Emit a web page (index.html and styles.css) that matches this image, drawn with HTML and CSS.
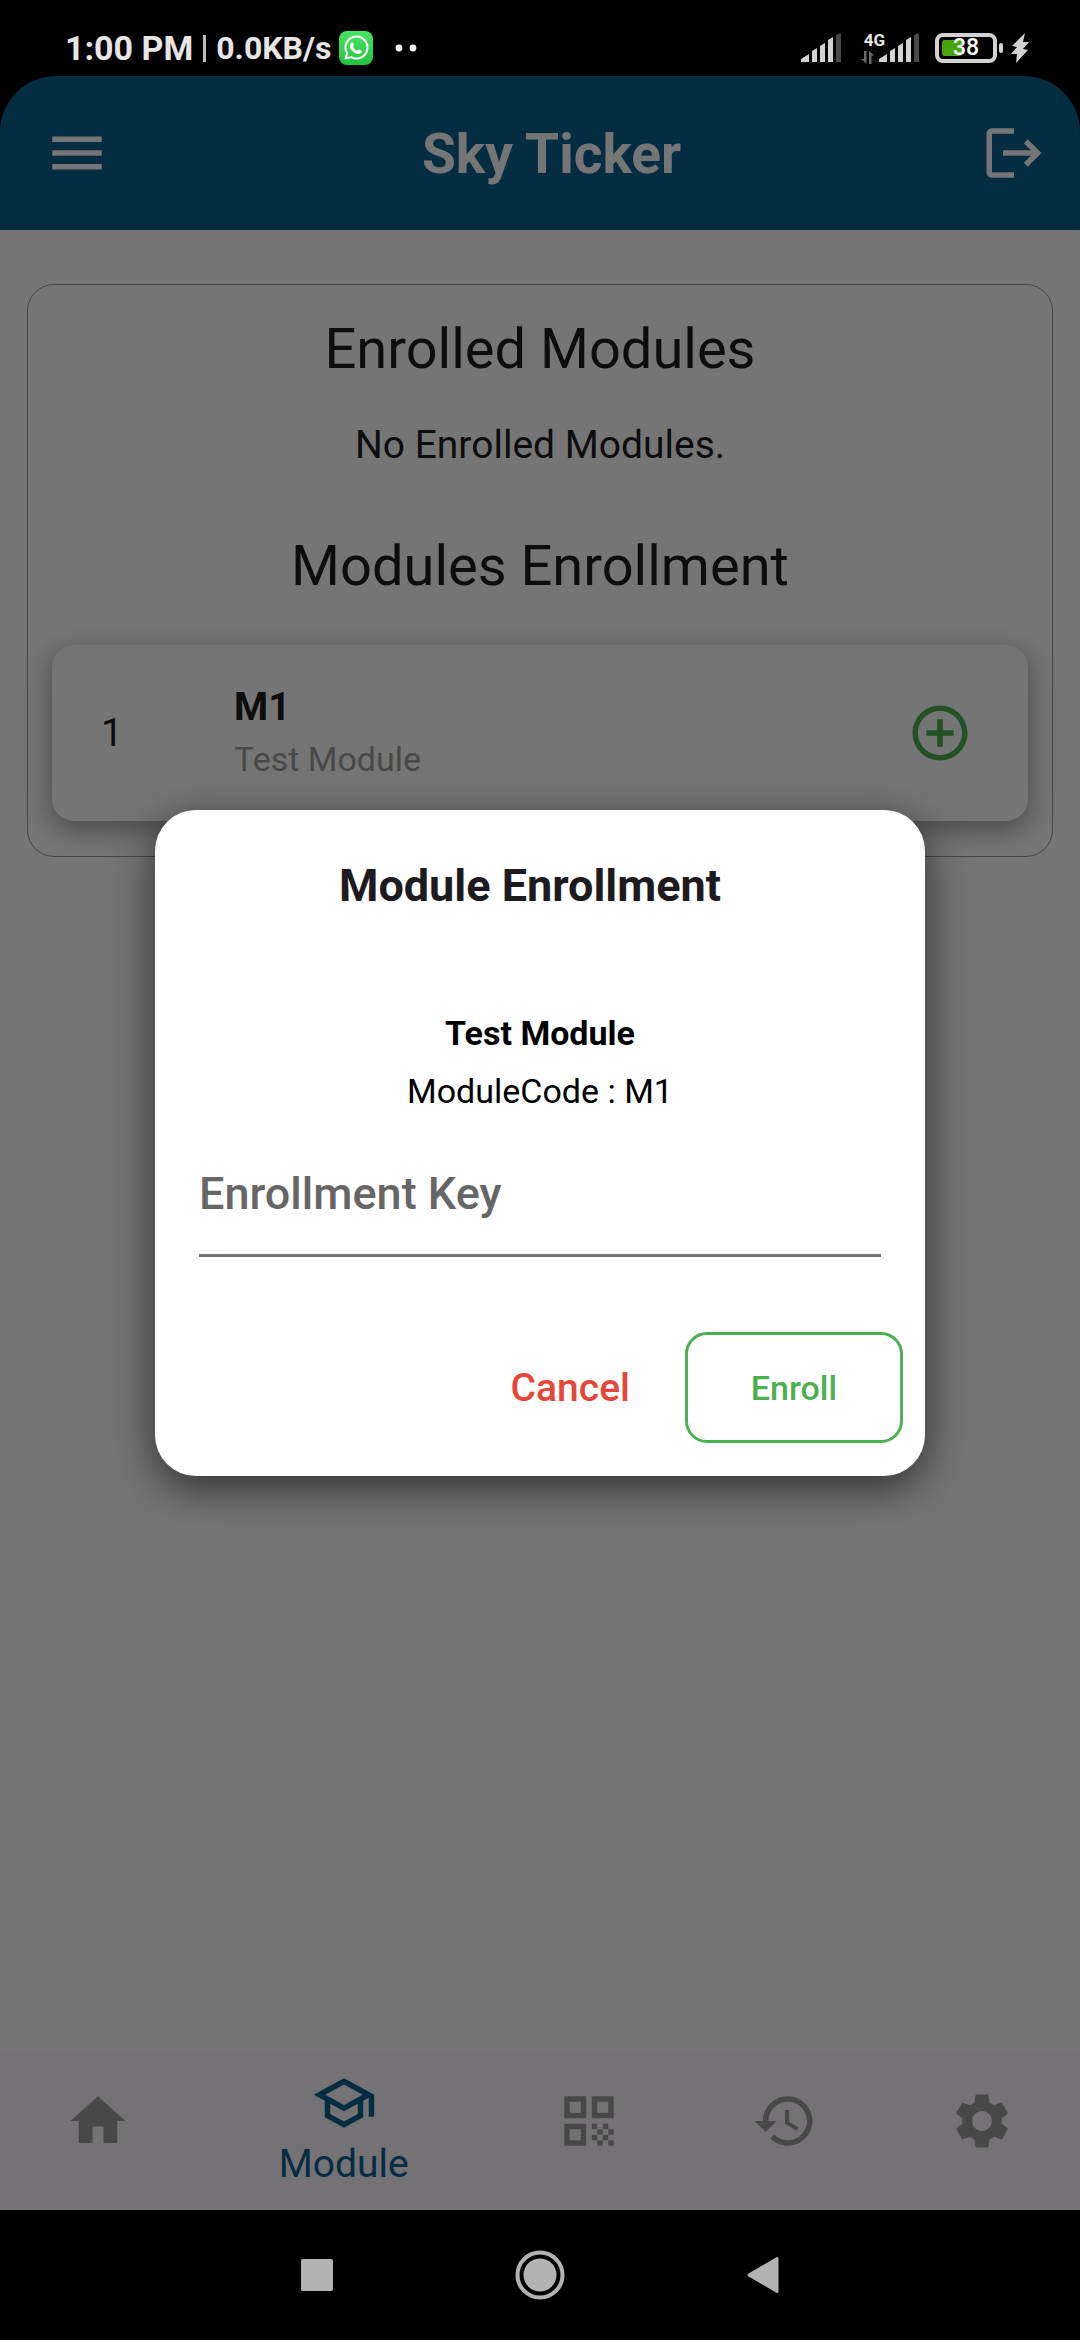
FILE: index.html
```html
<!DOCTYPE html>
<html lang="en">
<head>
<meta charset="utf-8">
<meta name="viewport" content="width=device-width, initial-scale=1">
<title>Sky Ticker</title>
<link rel="stylesheet" href="styles.css">
</head>
<body>
<div class="statusbar">
  <div class="status-left">
    <span class="clock">1:00 PM</span>
    <span class="divider"></span>
    <span class="speed">0.0KB/s</span>
    <svg class="whatsapp" width="34" height="34" viewBox="0 0 34 34" aria-hidden="true">
      <defs><linearGradient id="wa" x1="0" y1="0" x2="0" y2="1"><stop offset="0" stop-color="#47e464"/><stop offset="1" stop-color="#27c23f"/></linearGradient></defs>
      <rect width="34" height="34" rx="8" fill="url(#wa)"/>
      <path d="M6.600 27.600l1.500-5.400A11 11 0 1 1 12.200 26.100z" fill="none" stroke="#fff" stroke-width="2" stroke-linejoin="round"/>
      <path d="M12.400 11.400c.6-.4 1.300-.3 1.600.4l.9 2.200c.2.600-.9 1.500-.8 1.900.9 1.800 2.200 3 4.200 3.800.400.100 1.200-1.400 1.700-1.200l2.400 1.200c.7.400.2 2.100-.5 2.600-1.700 1.300-4.100.8-6.500-.6-2.500-1.500-4.500-4.100-4.600-6.600 0-1.700.7-3 1.600-3.700z" fill="#fff"/>
    </svg>
    <svg class="dots" width="22" height="8" viewBox="0 0 22 8" aria-hidden="true"><circle cx="4" cy="4" r="3.400" fill="#fff"/><circle cx="18" cy="4" r="3.400" fill="#fff"/></svg>
  </div>
  <div class="status-right">
    <svg class="signal" width="40" height="30" viewBox="0 0 40 30" aria-hidden="true">
      <path d="M0 29v-3l8-5v8zM11 29V18l5-3v14zM19 29V13l5-3v19zM27 29V7l5-3v25z" fill="#d2d2d2"/><path d="M35 29V2l5-2v29z" fill="#484848"/>
    </svg>
    <div class="network">
      <span class="network-type">4G</span>
      <svg width="14" height="13" viewBox="0 0 14 13" aria-hidden="true"><path d="M5.500 0v12.500L0 8h3V0zM8 13V0l5.500 4.500H10.500V13z" fill="#6a6a6a"/></svg>
    </div>
    <svg class="signal-second" width="40" height="30" viewBox="0 0 40 30" aria-hidden="true">
      <path d="M0 29v-3l8-5v8zM11 29V18l5-3v14zM19 29V13l5-3v19zM27 29V7l5-3v25z" fill="#d2d2d2"/><path d="M35 29V2l5-2v29z" fill="#484848"/>
    </svg>
    <div class="battery"><span class="battery-level"></span><span class="battery-text">38</span></div>
    <span class="battery-cap"></span>
    <svg class="bolt" width="18" height="30" viewBox="0 0 18 30" aria-hidden="true"><path d="M14 0L1 13l5 1-6 7h6L5 30 17 17l-5-1 6-7h-6z" fill="#d2d2d2"/></svg>
  </div>
</div>

<div class="app">
  <header class="appbar">
    <button class="icon-button menu-button" type="button" aria-label="Open menu">
      <svg class="icon" viewBox="0 0 24 24"><path d="M3 18h18v-2H3v2zm0-5h18v-2H3v2zm0-7v2h18V6H3z"/></svg>
    </button>
    <h1 class="app-title">Sky Ticker</h1>
    <button class="icon-button" type="button" aria-label="Log out">
      <svg class="icon" viewBox="0 0 24 24"><path d="M17 7l-1.410 1.410L18.170 11H8v2h10.170l-2.580 2.580L17 17l5-5zM4 5h8V3H4c-1.100 0-2 .9-2 2v14c0 1.100.9 2 2 2h8v-2H4V5z"/></svg>
    </button>
  </header>

  <main class="content">
    <section class="panel">
      <h2 class="heading">Enrolled Modules</h2>
      <p class="empty">No Enrolled Modules.</p>
      <h2 class="heading">Modules Enrollment</h2>
      <article class="module">
        <span class="module-number">1</span>
        <div class="module-info">
          <h3 class="module-code">M1</h3>
          <p class="module-name">Test Module</p>
        </div>
        <button class="icon-button add-button" type="button" aria-label="Enroll in Test Module">
          <svg class="icon" viewBox="0 0 24 24"><path d="M13 7h-2v4H7v2h4v4h2v-4h4v-2h-4V7zm-1-5C6.480 2 2 6.480 2 12s4.480 10 10 10 10-4.480 10-10S17.520 2 12 2zm0 18c-4.410 0-8-3.590-8-8s3.590-8 8-8 8 3.590 8 8-3.590 8-8 8z"/></svg>
        </button>
      </article>
    </section>
  </main>

  <nav class="tabs" aria-label="Main">
    <a class="tab" href="#home" aria-label="Home"><svg class="icon" viewBox="0 0 24 24"><path d="M10 20v-6h4v6h5v-8h3L12 3 2 12h3v8z"/></svg></a>
    <a class="tab tab-active" href="#module" aria-current="page"><svg class="icon" viewBox="0 0 24 24"><path d="M12 3L1 9l4 2.180v6L12 21l7-3.820v-6l2-1.090V17h2V9L12 3zm6.820 6L12 12.720 5.180 9 12 5.280 18.820 9zM17 15.990l-5 2.730-5-2.730v-3.720L12 15l5-2.730v3.720z"/></svg><span class="tab-label">Module</span></a>
    <a class="tab" href="#scan" aria-label="QR code"><svg class="icon" viewBox="0 0 24 24"><path d="M3 11h8V3H3v8zm2-6h4v4H5V5zM3 21h8v-8H3v8zm2-6h4v4H5v-4zM13 3v8h8V3h-8zm6 6h-4V5h4v4zM19 19h2v2h-2zM13 13h2v2h-2zM15 15h2v2h-2zM13 17h2v2h-2zM15 19h2v2h-2zM17 17h2v2h-2zM17 13h2v2h-2zM19 15h2v2h-2z"/></svg></a>
    <a class="tab" href="#history" aria-label="History"><svg class="icon" viewBox="0 0 24 24"><path d="M13 3c-4.970 0-9 4.030-9 9H1l3.890 3.890.070.140L9 12H6c0-3.870 3.130-7 7-7s7 3.130 7 7-3.130 7-7 7c-1.930 0-3.680-.790-4.940-2.060l-1.420 1.420C8.270 19.990 10.510 21 13 21c4.970 0 9-4.030 9-9s-4.030-9-9-9zm-1 5v5l4.280 2.540.720-1.210-3.500-2.080V8H12z"/></svg></a>
    <a class="tab" href="#settings" aria-label="Settings"><svg class="icon" viewBox="0 0 24 24"><path d="M19.140 12.940c.040-.3.060-.610.060-.940 0-.320-.020-.640-.070-.940l2.030-1.580c.180-.140.230-.410.120-.610l-1.920-3.320c-.120-.220-.370-.290-.590-.220l-2.390.960c-.5-.380-1.030-.7-1.620-.940l-.360-2.540c-.040-.240-.240-.410-.480-.410h-3.840c-.240 0-.430.170-.470.410l-.360 2.540c-.590.240-1.130.570-1.620.940l-2.390-.960c-.220-.080-.470 0-.590.220L2.740 8.870c-.120.210-.080.470.120.610l2.030 1.580c-.050.3-.090.630-.090.940s.020.640.070.940l-2.030 1.580c-.180.140-.230.410-.120.610l1.920 3.320c.120.220.370.290.590.220l2.390-.960c.5.380 1.030.7 1.620.940l.360 2.540c.050.240.240.410.480.410h3.840c.240 0 .440-.170.470-.410l.360-2.540c.590-.240 1.130-.560 1.620-.940l2.390.960c.220.080.470 0 .590-.220l1.920-3.320c.120-.220.070-.470-.120-.610l-2.010-1.580zM12 15.600c-1.980 0-3.600-1.620-3.600-3.600s1.620-3.600 3.600-3.600 3.600 1.620 3.600 3.600-1.620 3.600-3.600 3.600z"/></svg></a>
  </nav>

  <div class="scrim">
    <form class="dialog" role="dialog" aria-modal="true" aria-labelledby="dialog-title">
      <h2 class="dialog-title" id="dialog-title">Module Enrollment</h2>
      <p class="dialog-module">Test Module</p>
      <p class="dialog-code">ModuleCode : M1</p>
      <input class="key-input" type="text" placeholder="Enrollment Key" aria-label="Enrollment Key">
      <div class="dialog-actions">
        <button class="cancel" type="button">Cancel</button>
        <button class="enroll" type="submit">Enroll</button>
      </div>
    </form>
  </div>
</div>

<div class="systembar">
  <button class="system-button" type="button" aria-label="Recent apps"><svg width="50" height="50" viewBox="0 0 50 50"><rect x="9" y="9" width="32" height="32" rx="2"/></svg></button>
  <button class="system-button" type="button" aria-label="Home screen"><svg width="50" height="50" viewBox="0 0 50 50"><circle cx="25" cy="25" r="16.500"/><circle class="ring" cx="25" cy="25" r="22.500"/></svg></button>
  <button class="system-button" type="button" aria-label="Back"><svg width="50" height="50" viewBox="0 0 50 50"><path d="M10.500 23.500L38.500 7.300q2-1 2 1.500v32.400q0 2.500-2 1.500L10.500 26.500q-2-1.500 0-3z"/></svg></button>
</div>
</body>
</html>
```
FILE: styles.css
```css
* {
  box-sizing: border-box;
}

body {
  margin: 0;
  min-height: 100vh;
  display: flex;
  flex-direction: column;
  background: #000;
  color: #1d1b20;
  font-family: Roboto, "Liberation Sans", sans-serif;
}

h1, h2, h3, p {
  margin: 0;
  font-weight: 400;
}

button, input {
  font-family: inherit;
  margin: 0;
}

button {
  padding: 0;
  border: 0;
  background: none;
  color: inherit;
}

svg {
  display: block;
}

.icon {
  width: 66px;
  height: 66px;
  fill: currentColor;
}

/* Status bar */
.statusbar {
  height: 76px;
  padding: 19px 51px 0 65px;
  display: flex;
  justify-content: space-between;
  align-items: center;
  color: #e6e6e6;
}

.status-left, .status-right {
  display: flex;
  align-items: center;
}

.clock {
  font-size: 34px;
  line-height: 40px;
  font-weight: 700;
}

.divider {
  width: 3px;
  height: 27px;
  margin: 2px 10px 0;
  background: #bdbdbd;
}

.speed {
  font-size: 32px;
  line-height: 40px;
  font-weight: 700;
}

.whatsapp {
  margin-left: 8px;
}

.dots {
  margin-left: 22px;
}

.network {
  width: 28px;
  height: 32px;
  margin-left: 20px;
  display: flex;
  flex-direction: column;
  justify-content: space-between;
}

.network-type {
  align-self: flex-end;
  margin-right: 4px;
  font-size: 17px;
  line-height: 16px;
  font-weight: 700;
}

.signal-second {
  margin-left: -10px;
}

.battery {
  width: 62px;
  height: 30px;
  margin-left: 16px;
  position: relative;
  display: flex;
  align-items: center;
  justify-content: center;
  border: 4px solid #d2d2d2;
  border-radius: 8px;
}

.battery-level {
  position: absolute;
  left: 3px;
  top: 3px;
  bottom: 3px;
  width: 20px;
  border-radius: 3px;
  background: #48a510;
}

.battery-text {
  position: relative;
  font-size: 23px;
  line-height: 24px;
  font-weight: 500;
  color: #fff;
}

.battery-cap {
  width: 4px;
  height: 10px;
  margin-left: 2px;
  border-radius: 2px;
  background: #d2d2d2;
}

.bolt {
  margin-left: 8px;
}

/* App */
.app {
  flex: 1;
  position: relative;
  display: flex;
  flex-direction: column;
}

.appbar {
  height: 154px;
  padding: 0 33px 0 44px;
  display: flex;
  align-items: center;
  border-radius: 56px 56px 0 0;
  background: #09628f;
  color: #fff;
}

.menu-button {
  margin-right: 12px;
}

.app-title {
  flex: 1;
  padding-top: 2px;
  text-align: center;
  font-size: 55px;
  line-height: 64px;
  font-weight: 700;
}

.content {
  flex: 1;
  padding: 54px 27px;
  background: #fff;
}

.panel {
  padding: 32px 24px 35px;
  border: 1px solid #9e9e9e;
  border-radius: 27px;
  text-align: center;
}

.heading {
  font-size: 56px;
  line-height: 64px;
}

.empty {
  margin: 40px 0 65px;
  font-size: 39px;
  line-height: 48px;
}

.module {
  margin-top: 47px;
  padding: 36px 55px;
  display: flex;
  align-items: center;
  border-radius: 22px;
  background: #fff;
  box-shadow: 0 8px 28px rgba(0, 0, 0, 0.4);
  text-align: left;
}

.module-number {
  width: 127px;
  padding-left: 0;
  margin-left: -6px;
  margin-right: 6px;
  font-size: 39px;
  line-height: 48px;
}

.module-info {
  flex: 1;
}

.module-code {
  font-size: 39px;
  line-height: 52px;
  font-weight: 700;
}

.module-name {
  font-size: 34px;
  line-height: 52px;
  color: #9e9e9e;
}

.add-button {
  color: #4caf50;
}

/* Bottom tabs */
.tabs {
  height: 160px;
  display: flex;
  background: #fef8ff;
}

.tab {
  flex: 1;
  padding-top: 38px;
  display: flex;
  flex-direction: column;
  align-items: center;
  color: #9e9e9e;
  text-decoration: none;
}

.tab-active {
  flex: 1.5;
  padding-top: 20px;
  color: #09628f;
}

.tab-label {
  font-size: 39px;
  line-height: 56px;
}

/* Enrollment dialog */
.scrim {
  position: absolute;
  inset: 0;
  padding: 0 155px;
  display: flex;
  align-items: center;
  justify-content: center;
  background: rgba(0, 0, 0, 0.54);
}

.dialog {
  flex: 1;
  padding: 50px 44px 33px;
  display: flex;
  flex-direction: column;
  border-radius: 41px;
  background: #fff;
  box-shadow: 0 12px 44px rgba(0, 0, 0, 0.6);
  color: #000;
  text-align: center;
}

.dialog-title {
  padding-right: 20px;
  font-size: 45px;
  line-height: 52px;
  font-weight: 700;
  color: #1d1b20;
}

.dialog-module {
  margin-top: 101px;
  font-size: 34px;
  line-height: 40px;
  font-weight: 700;
}

.dialog-code {
  margin-top: 18px;
  font-size: 34px;
  line-height: 40px;
}

.key-input {
  width: 100%;
  height: 125px;
  margin-top: 21px;
  padding: 0;
  border: 0;
  border-bottom: 3px solid #79747e;
  border-radius: 0;
  outline: 0;
  background: none;
  font-size: 45px;
  font-weight: 500;
}

.key-input::placeholder {
  color: #666;
  opacity: 1;
}

.dialog-actions {
  margin: 75px -22px 0 0;
  display: flex;
  justify-content: flex-end;
  align-items: center;
  gap: 55px;
}

.cancel {
  font-size: 39px;
  line-height: 48px;
  font-weight: 500;
  color: #e8453a;
}

.enroll {
  width: 218px;
  height: 111px;
  border: 3px solid #4caf50;
  border-radius: 22px;
  font-size: 34px;
  font-weight: 500;
  color: #4caf50;
}

/* System navigation */
.systembar {
  height: 130px;
  display: flex;
  align-items: center;
  justify-content: center;
  gap: 173px;
}

.system-button {
  fill: #b3b3b3;
}

.ring {
  fill: none;
  stroke: #b3b3b3;
  stroke-width: 4px;
}
```
